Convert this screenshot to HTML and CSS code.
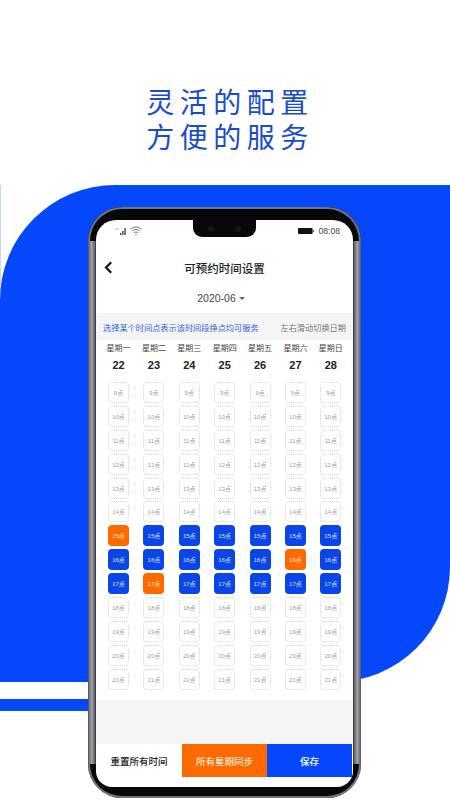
FILE: index.html
```html
<!DOCTYPE html>
<html lang="zh">
<head>
<meta charset="utf-8">
<title>灵活的配置 方便的服务</title>
<link rel="stylesheet" href="styles.css">
</head>
<body>
<div class="page">
  <h1 class="headline"><span>灵活的配置</span><span>方便的服务</span></h1>
  <div class="hero">
    <div class="left-edge"></div>
    <div class="stripe"></div>
    <div class="phone">
      <div class="screen">
        <div class="notch"><i></i><i></i></div>
        <div class="status">
          <div class="status-left">
            <svg width="11" height="8" viewBox="0 0 11 8"><circle cx="1" cy="2" r=".7" fill="#999"/><circle cx="3" cy="2" r=".7" fill="#999"/><path d="M5 8V6h1.2v2zM7.2 8V4h1.3v4zM9.4 8V1h1.3v7z" fill="#333"/></svg>
            <svg width="12" height="10" viewBox="0 0 12 10" fill="none" stroke="#555" stroke-width=".8"><path d="M.6 3.2a7.6 7.6 0 0 1 10.8 0M2.3 5a5.2 5.2 0 0 1 7.4 0M4 6.8a2.8 2.8 0 0 1 4 0M5.4 8.6a.9.9 0 0 1 1.2 0"/></svg>
          </div>
          <div class="status-right">
            <svg width="16" height="6" viewBox="0 0 16 6"><rect width="14.6" height="6" rx="1" fill="#111"/><rect x="15" y="2" width="1" height="2" fill="#555"/></svg>
            <span>08:08</span>
          </div>
        </div>
        <div class="header">
          <svg class="back" width="9" height="13" viewBox="0 0 9 13" fill="none" stroke="#111" stroke-width="2.2"><path d="M7.2 1.2 2 6.5l5.2 5.3"/></svg>
          <span>可预约时间设置</span>
        </div>
        <div class="month"><span>2020-06</span><b class="caret"></b></div>
        <div class="info"><span class="info-main">选择某个时间点表示该时间段挣点均可服务</span><span class="info-side">左右滑动切换日期</span></div>
        <div class="schedule">
          <div class="days">
            <div class="day"><span>星期一</span><b>22</b></div>
            <div class="day"><span>星期二</span><b>23</b></div>
            <div class="day"><span>星期三</span><b>24</b></div>
            <div class="day"><span>星期四</span><b>25</b></div>
            <div class="day"><span>星期五</span><b>26</b></div>
            <div class="day"><span>星期六</span><b>27</b></div>
            <div class="day"><span>星期日</span><b>28</b></div>
          </div>
          <div class="slots">
            <div class="slot">9点</div><div class="slot">9点</div><div class="slot">9点</div><div class="slot">9点</div><div class="slot">9点</div><div class="slot">9点</div><div class="slot">9点</div>
            <div class="slot">10点</div><div class="slot">10点</div><div class="slot">10点</div><div class="slot">10点</div><div class="slot">10点</div><div class="slot">10点</div><div class="slot">10点</div>
            <div class="slot">11点</div><div class="slot">11点</div><div class="slot">11点</div><div class="slot">11点</div><div class="slot">11点</div><div class="slot">11点</div><div class="slot">11点</div>
            <div class="slot">12点</div><div class="slot">12点</div><div class="slot">12点</div><div class="slot">12点</div><div class="slot">12点</div><div class="slot">12点</div><div class="slot">12点</div>
            <div class="slot">13点</div><div class="slot">13点</div><div class="slot">13点</div><div class="slot">13点</div><div class="slot">13点</div><div class="slot">13点</div><div class="slot">13点</div>
            <div class="slot">14点</div><div class="slot">14点</div><div class="slot">14点</div><div class="slot">14点</div><div class="slot">14点</div><div class="slot">14点</div><div class="slot">14点</div>
            <div class="slot orange">15点</div><div class="slot blue">15点</div><div class="slot blue">15点</div><div class="slot blue">15点</div><div class="slot blue">15点</div><div class="slot blue">15点</div><div class="slot blue">15点</div>
            <div class="slot blue">16点</div><div class="slot blue">16点</div><div class="slot blue">16点</div><div class="slot blue">16点</div><div class="slot blue">16点</div><div class="slot orange">16点</div><div class="slot blue">16点</div>
            <div class="slot blue">17点</div><div class="slot orange">17点</div><div class="slot blue">17点</div><div class="slot blue">17点</div><div class="slot blue">17点</div><div class="slot blue">17点</div><div class="slot blue">17点</div>
            <div class="slot">18点</div><div class="slot">18点</div><div class="slot">18点</div><div class="slot">18点</div><div class="slot">18点</div><div class="slot">18点</div><div class="slot">18点</div>
            <div class="slot">19点</div><div class="slot">19点</div><div class="slot">19点</div><div class="slot">19点</div><div class="slot">19点</div><div class="slot">19点</div><div class="slot">19点</div>
            <div class="slot">20点</div><div class="slot">20点</div><div class="slot">20点</div><div class="slot">20点</div><div class="slot">20点</div><div class="slot">20点</div><div class="slot">20点</div>
            <div class="slot">21点</div><div class="slot">21点</div><div class="slot">21点</div><div class="slot">21点</div><div class="slot">21点</div><div class="slot">21点</div><div class="slot">21点</div>
          </div>
        </div>
        <div class="spacer"></div>
        <div class="actions">
          <div class="action reset">重置所有时间</div>
          <div class="action sync">所有星期同步</div>
          <div class="action save">保存</div>
        </div>
      </div>
    </div>
  </div>
</div>
</body>
</html>
```
FILE: styles.css
```css
* { box-sizing: border-box; }
html, body { margin: 0; padding: 0; background: #fff; }
body { font-family: "Liberation Sans", "Noto Sans CJK SC", sans-serif; overflow: hidden; }
.page { width: 450px; height: 800px; overflow: hidden; display: flex; flex-direction: column; }

.headline {
  margin: 0;
  height: 185px;
  padding: 84px 0 0 10px;
  display: flex;
  flex-direction: column;
  align-items: center;
  font-family: "Noto Sans CJK SC", sans-serif;
  font-weight: 400;
  font-size: 28px;
  line-height: 35px;
  letter-spacing: 5.5px;
  color: #1a4cc8;
}
.headline span { display: block; height: 35px; }

.hero {
  position: relative;
  height: 497px;
  padding: 22px 0 0 88px;
  background: #0548fb;
  border-radius: 115px 0 115px 0;
}
.left-edge { position: absolute; left: 0; top: 0; width: 1px; height: 100px; background: #cbd6ee; }
.stripe { position: absolute; left: 0; top: 514px; width: 90px; height: 12px; background: #0548fb; }

.phone {
  position: relative;
  width: 273px;
  height: 591px;
  padding: 13px 8px 11px;
  background: #08080a;
  border-radius: 34px;
  box-shadow: inset 0 0 0 2px #74747c;
}
.phone::before, .phone::after {
  content: "";
  position: absolute;
  top: 34px;
  bottom: 34px;
  width: 8px;
  background: linear-gradient(90deg, #55555c, #a2a2a8 45%, #6a6a70 80%, #2c2c30);
}
.phone::before { left: 0; }
.phone::after { right: 0; transform: scaleX(-1); }

.screen {
  position: relative;
  height: 567px;
  background: #fff;
  border-radius: 20px 20px 16px 16px;
  overflow: hidden;
  display: flex;
  flex-direction: column;
}
.notch {
  position: absolute;
  left: 97px;
  top: 0;
  width: 63px;
  height: 17px;
  background: #08080a;
  border-radius: 0 0 9px 9px;
  display: flex;
  justify-content: center;
  gap: 21px;
  padding-top: 6px;
}
.notch i { width: 6px; height: 6px; border-radius: 50%; background: #10181c; }

.status {
  height: 22px;
  flex: none;
  padding: 0 13px 0 19px;
  display: flex;
  justify-content: space-between;
  align-items: center;
}
.status-left { display: flex; align-items: center; gap: 4px; }
.status-right { display: flex; align-items: center; gap: 4px; font-size: 8.6px; color: #444; }

.header {
  position: relative;
  flex: none;
  height: 36px;
  margin-top: 8px;
  display: flex;
  justify-content: center;
  align-items: center;
  font-size: 11.5px;
  font-weight: 500;
  color: #222;
}
.back { position: absolute; left: 8px; top: 11px; }

.month {
  flex: none;
  height: 27px;
  padding: 0 7px 3px 0;
  display: flex;
  justify-content: center;
  align-items: center;
  gap: 3px;
  font-size: 10.5px;
  color: #444;
}
.caret { width: 0; height: 0; border-left: 3px solid transparent; border-right: 3px solid transparent; border-top: 3.5px solid #666; }

.info {
  flex: none;
  height: 27px;
  background: #f5f5f6;
  padding: 0 7px;
  display: flex;
  justify-content: space-between;
  align-items: center;
  font-size: 8.2px;
}
.info-main { color: #2f62d8; }
.info-side { color: #777; }

.schedule { flex: none; height: 360px; padding: 1px 12px 0; }
.days {
  display: grid;
  grid-template-columns: repeat(7, 21px);
  column-gap: 14.4px;
  height: 32px;
}
.day { display: flex; flex-direction: column; align-items: center; white-space: nowrap; }
.day span { height: 16px; line-height: 16px; font-size: 8px; color: #444; }
.day b { height: 16px; line-height: 16px; font-size: 11px; color: #222; }

.slots {
  margin-top: 9px;
  display: grid;
  grid-template-columns: repeat(7, 21px);
  grid-auto-rows: 21px;
  column-gap: 14.4px;
  row-gap: 2.9px;
}
.slot {
  display: flex;
  justify-content: center;
  align-items: center;
  border: 1px dotted #d4d4d4;
  border-radius: 4px;
  font-size: 6px;
  color: #a0a0a0;
  white-space: nowrap;
}
.slot.blue { background: #0a45e8; border: none; color: #dfe7ff; }
.slot.orange { background: #ff6a00; border: none; color: #ffe6d0; }

.spacer { flex: 1; background: #f5f5f5; }

.actions { flex: none; height: 43px; padding-bottom: 10px; display: grid; grid-template-columns: 86px 85px 85px; }
.action { display: flex; justify-content: center; align-items: center; font-size: 9.5px; font-weight: 500; }
.reset { color: #222; }
.sync { background: #ff6a00; color: #ffe9d6; }
.save { background: #0548fb; color: #fff; }
```
